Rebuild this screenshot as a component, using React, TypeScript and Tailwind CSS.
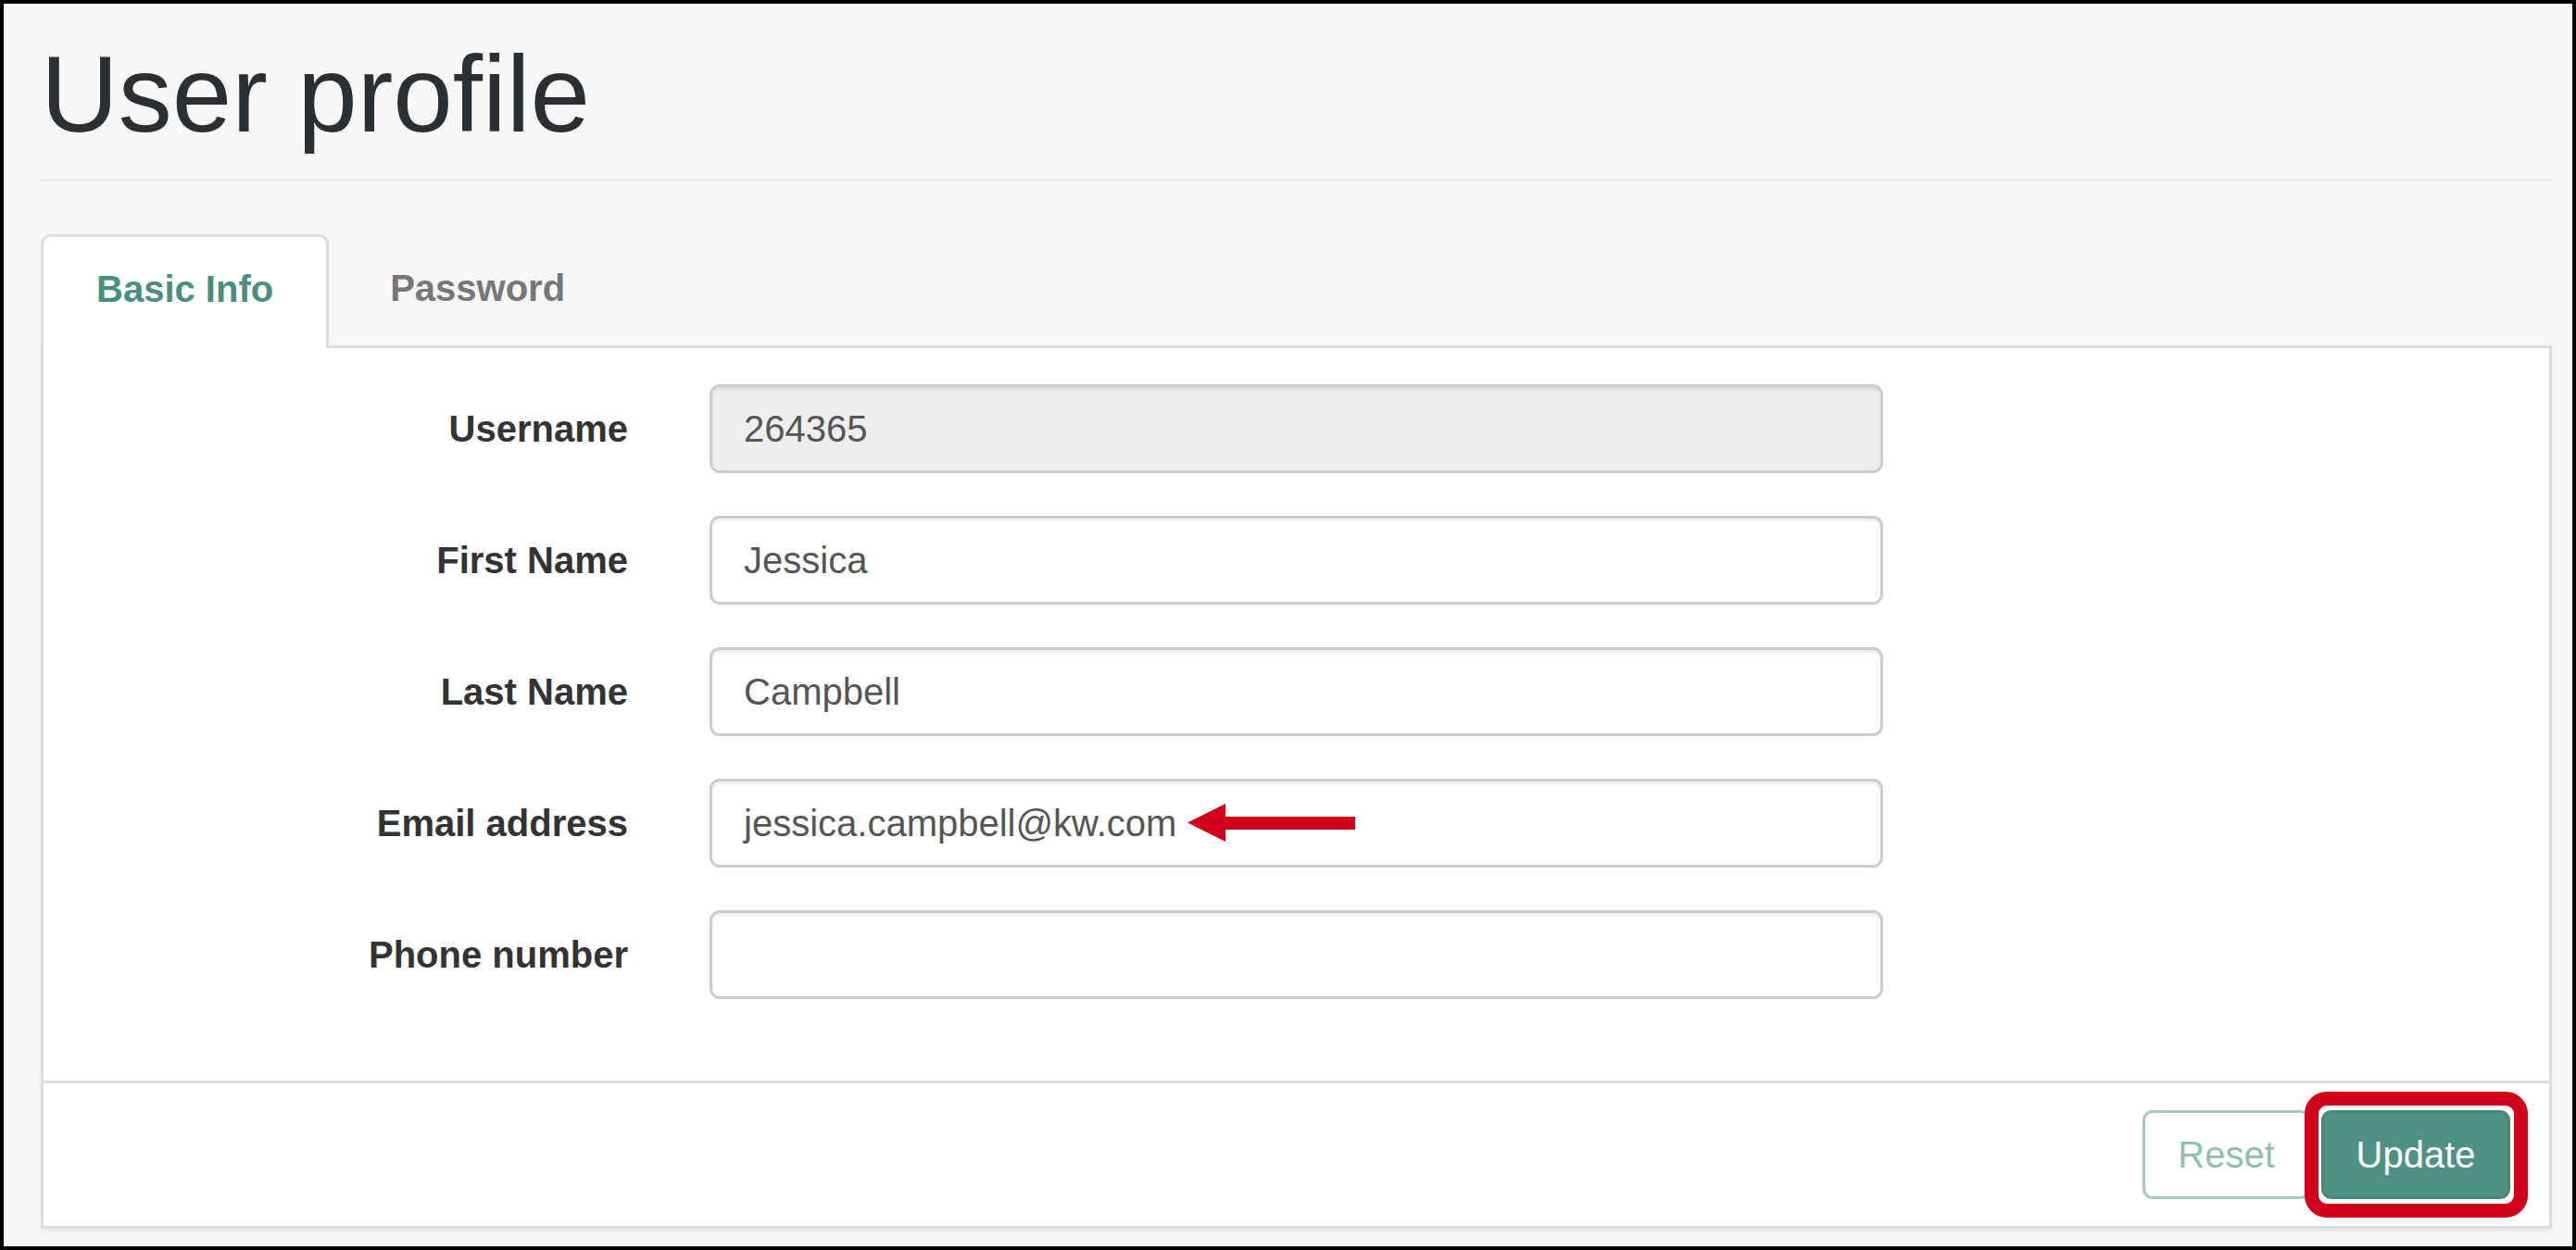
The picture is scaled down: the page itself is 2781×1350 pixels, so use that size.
import React from "react";

const font = { fontFamily: '"Liberation Sans", Arial, Helvetica, sans-serif' };

function Row({ label, value, disabled, arrow }: { label: string; value: string; disabled?: boolean; arrow?: boolean }) {
  return (
    <div className="flex items-center">
      <div className="w-[631px] text-right text-[40px] font-bold text-[#333333]">{label}</div>
      <div
        className={
          "relative ml-[88px] flex h-[96px] w-[1267px] items-center rounded-[11px] border-[3px] border-[#cccccc] px-[34px] text-[40px] text-[#555555] shadow-[inset_0_3px_3px_rgba(0,0,0,0.075)] " +
          (disabled ? "bg-[#eeeeee]" : "bg-white")
        }
      >
        <span>{value}</span>
        {arrow && (
          <svg className="absolute left-[513px] top-[24px]" width="181" height="41" viewBox="0 0 181 41">
            <polygon points="0,20.5 41,0 41,14 181,14 181,28 41,28 41,41" fill="#d0021b" />
          </svg>
        )}
      </div>
    </div>
  );
}

export default function App() {
  return (
    <div
      style={font}
      className="h-[1350px] w-[2781px] overflow-hidden border-4 border-black bg-[#f7f7f7] pl-[40px] pr-[22px]"
    >
      <div className="mt-[35px] border-b-[3px] border-[#e9e9e9] pb-[26px]">
        <h1 className="text-[116px] leading-[1.1] font-normal text-[#2a2f33]">User profile</h1>
      </div>

      <div className="mt-[57px] flex items-end">
        <div className="relative z-10 -mb-[3px] flex h-[123px] items-center rounded-t-[11px] border-x-[3px] border-t-[3px] border-[#dddddd] bg-white px-[57px] pb-[7px] text-[40px] font-bold text-[#4a8e7f]">
          Basic Info
        </div>
        <div className="ml-[6px] flex h-[120px] items-center px-[60px] pb-[3px] text-[40px] font-bold text-[#777777]">
          Password
        </div>
      </div>

      <div className="border-[3px] border-[#dddddd] bg-white shadow-[0_3px_4px_rgba(0,0,0,0.06)]">
        <div className="flex flex-col gap-[46px] pt-[39px] pb-[88px]">
          <Row label="Username" value="264365" disabled />
          <Row label="First Name" value="Jessica" />
          <Row label="Last Name" value="Campbell" />
          <Row label="Email address" value="jessica.campbell@kw.com" arrow />
          <Row label="Phone number" value="" />
        </div>
        <div className="flex justify-end gap-[12px] border-t-[3px] border-[#dddddd] px-[42px] py-[29px]">
          <div className="flex h-[96px] w-[181px] items-center justify-center rounded-[11px] border-[3px] border-[#a3cac1] text-[40px] text-[#93bdb3]">
            Reset
          </div>
          <div className="relative flex h-[96px] w-[204px] items-center justify-center rounded-[11px] border-[3px] border-[#45877a] bg-[#4f9182] text-[40px] text-white">
            Update
            <div className="absolute -top-[23px] -bottom-[23px] -left-[21px] -right-[22px] rounded-[24px] border-[15px] border-[#d0021b]" />
          </div>
        </div>
      </div>
    </div>
  );
}
